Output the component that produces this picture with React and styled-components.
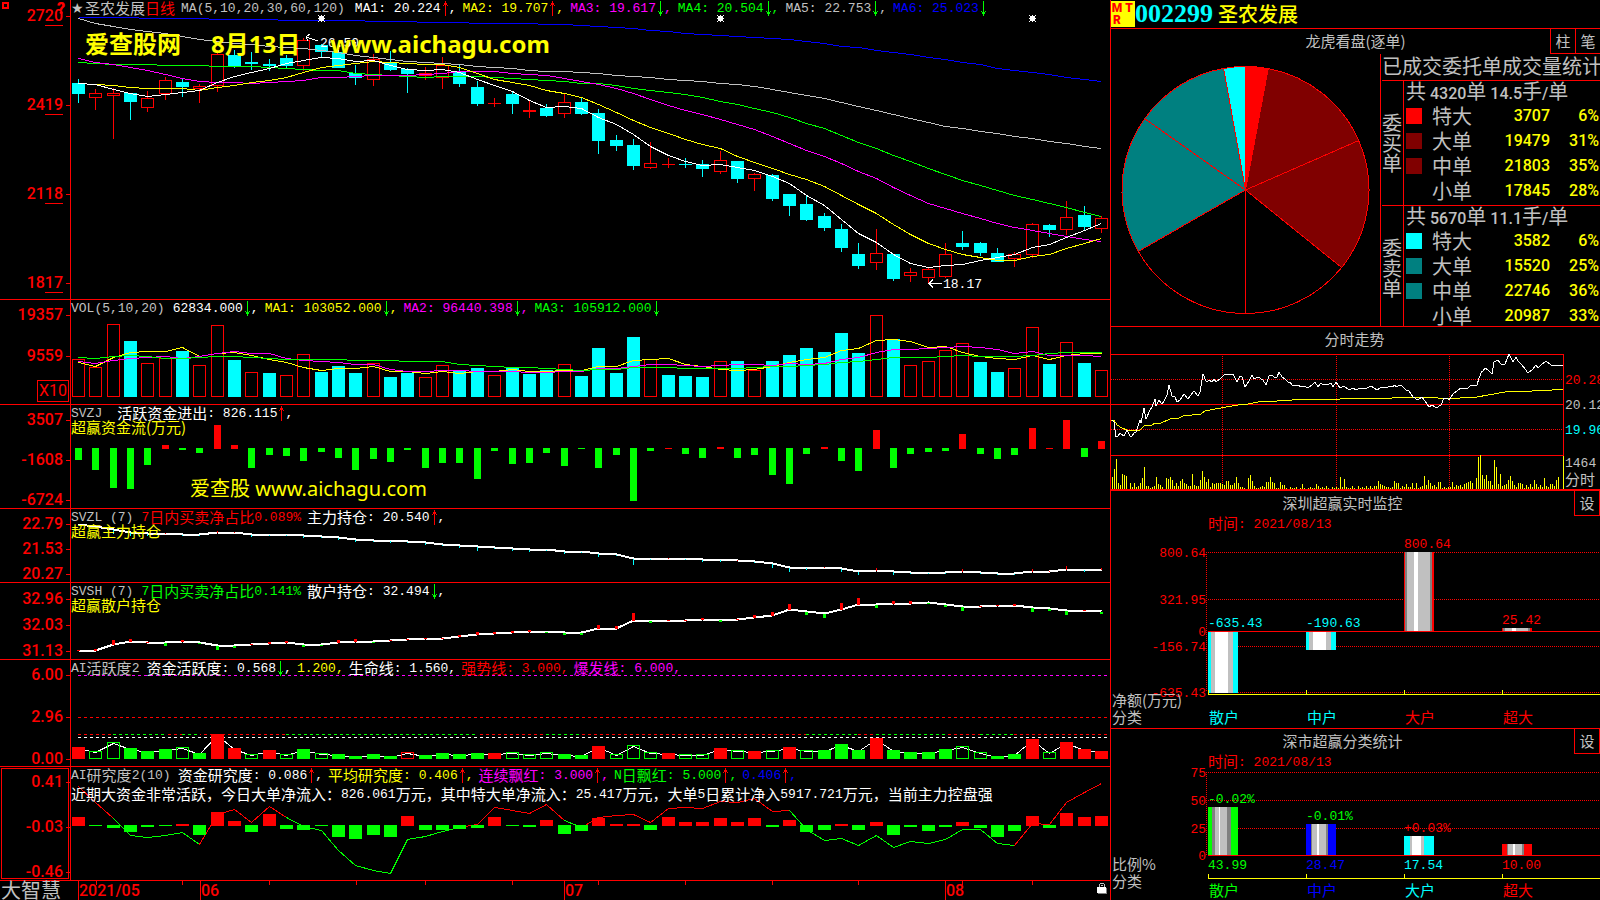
import React from "react";
import styled, { createGlobalStyle } from "styled-components";

const RED = "#ff0000";
const GREEN = "#00ff00";
const CYAN = "#00ffff";
const YELLOW = "#ffff00";
const MAGENTA = "#ff00ff";
const BLUE = "#0000ff";
const SILVER = "#c0c0c0";
const GREY = "#808080";
const WHITE = "#ffffff";
const MAROON = "#800000";
const TEAL = "#008080";

const HAN = '"Noto Sans CJK SC", sans-serif';
const MONO = '"Liberation Mono", "Noto Sans CJK SC", monospace';
const DIGITS = 'Roboto, "Noto Sans CJK SC", sans-serif';

/* ---------- data ---------- */

// type, high, body top, body bottom, low
const candles = [
  ["c", 79, 83, 94, 103], ["r", 89, 93, 98, 110], ["r", 88, 93, 96, 139], ["c", 93, 93, 102, 120],
  ["r", 91, 98, 108, 112], ["r", 77, 80, 94, 100], ["c", 78, 82, 87, 97], ["r", 84, 86, 89, 103],
  ["r", 50, 54, 86, 92], ["c", 50, 55, 67, 68], ["c", 52, 62, 64, 70], ["c", 59, 64, 66, 71],
  ["c", 55, 58, 66, 68], ["r", 38, 40, 66, 71], ["c", 44, 45, 52, 57], ["c", 50, 52, 68, 68],
  ["c", 65, 73, 78, 85], ["r", 54, 59, 80, 86], ["c", 51, 63, 70, 71], ["c", 68, 69, 74, 93],
  ["r", 67, 73, 76, 80], ["r", 57, 65, 78, 89], ["c", 65, 71, 84, 87], ["c", 81, 87, 104, 106],
  ["r", 98, 103, 104, 107], ["c", 92, 94, 104, 114], ["r", 101, 110, 112, 118], ["c", 104, 108, 116, 117],
  ["r", 94, 102, 114, 118], ["c", 98, 102, 114, 115], ["c", 109, 113, 141, 154], ["c", 135, 140, 146, 151],
  ["c", 139, 145, 166, 170], ["r", 142, 163, 168, 169], ["r", 158, 164, 165, 168], ["c", 158, 164, 165, 168],
  ["c", 160, 164, 169, 177], ["r", 151, 160, 172, 174], ["c", 161, 161, 179, 183], ["r", 173, 174, 179, 191],
  ["c", 174, 175, 199, 201], ["c", 194, 194, 206, 216], ["c", 196, 204, 220, 221], ["c", 213, 216, 228, 231],
  ["c", 224, 229, 248, 252], ["c", 243, 254, 266, 269], ["r", 229, 253, 263, 270], ["c", 254, 254, 279, 281],
  ["r", 268, 272, 276, 282], ["r", 267, 269, 278, 283], ["r", 243, 254, 277, 278], ["c", 231, 243, 247, 250],
  ["c", 242, 243, 253, 256], ["c", 248, 253, 262, 262], ["r", 252, 254, 259, 267], ["r", 223, 224, 255, 258],
  ["c", 224, 225, 230, 237], ["r", 201, 217, 230, 235], ["c", 206, 215, 227, 230], ["r", 216, 218, 229, 233],
];

// every series below is sampled at three units per pixel
const ma5 = [248, 253, 266, 280, 289, 281, 277, 271, 246, 228, 215, 205, 190, 181, 172, 175, 182, 179, 196, 207, 211, 206, 215, 237, 255, 273, 300, 322, 319, 325, 350, 371, 401, 437, 466, 482, 496, 493, 501, 510, 528, 550, 586, 616, 658, 698, 726, 763, 789, 802, 796, 793, 779, 770, 761, 742, 733, 710, 690, 669];
const ma10 = [250, 253, 255, 262, 265, 263, 265, 270, 262, 256, 246, 240, 231, 215, 200, 194, 189, 184, 187, 190, 193, 193, 200, 219, 236, 246, 254, 270, 280, 292, 311, 335, 361, 380, 398, 416, 433, 445, 468, 487, 505, 523, 538, 558, 584, 612, 640, 671, 702, 730, 748, 761, 770, 780, 781, 769, 763, 744, 730, 715];
const ma20 = [175, 186, 193, 202, 210, 222, 234, 243, 247, 247, 250, 246, 242, 239, 232, 230, 228, 226, 226, 224, 221, 218, 214, 214, 214, 218, 223, 226, 235, 242, 252, 265, 280, 298, 316, 329, 343, 357, 373, 388, 408, 430, 450, 469, 490, 514, 534, 560, 586, 610, 625, 640, 655, 670, 682, 691, 700, 709, 718, 724];
const ma30 = [187, 190, 192, 193, 193, 194, 194, 196, 197, 197, 199, 202, 205, 206, 209, 211, 219, 223, 226, 228, 230, 229, 227, 229, 232, 233, 237, 240, 244, 248, 250, 256, 263, 269, 276, 283, 292, 302, 313, 323, 336, 350, 368, 385, 404, 425, 443, 464, 484, 503, 521, 541, 556, 571, 585, 598, 610, 622, 635, 647];
const ma60 = [55, 68, 79, 88, 94, 100, 108, 116, 122, 128, 132, 137, 140, 145, 150, 156, 165, 171, 177, 182, 186, 190, 193, 197, 200, 204, 209, 212, 212, 215, 220, 224, 228, 232, 236, 240, 244, 248, 253, 259, 267, 277, 286, 295, 305, 319, 330, 342, 355, 367, 377, 385, 392, 400, 408, 415, 422, 429, 437, 445];
const ma120 = [52, 51, 50, 52, 53, 53, 54, 55, 56, 57, 58, 58, 59, 59, 60, 60, 61, 62, 64, 64, 65, 65, 65, 68, 68, 69, 70, 71, 73, 74, 77, 80, 85, 90, 94, 98, 101, 104, 107, 111, 115, 118, 122, 129, 137, 142, 149, 157, 163, 170, 178, 185, 193, 203, 209, 215, 223, 230, 236, 243];

const volTypes = "rrrcrrcrrcrcrrcccrccrrccrcccrccccrcccrcrccccccrcrrrrccrrcrcr";
const vol = [193, 217, 88, 138, 205, 189, 168, 211, 91, 195, 232, 234, 241, 178, 231, 213, 234, 205, 246, 234, 247, 211, 228, 219, 241, 216, 237, 226, 208, 243, 159, 234, 126, 193, 240, 243, 246, 199, 198, 226, 198, 180, 159, 171, 114, 174, 61, 132, 211, 199, 166, 145, 201, 231, 220, 97, 207, 142, 204, 226];
const volMa5 = [202, 214, 187, 171, 169, 169, 156, 183, 175, 172, 180, 192, 200, 216, 224, 220, 220, 213, 227, 228, 235, 228, 235, 229, 228, 223, 228, 227, 226, 226, 214, 214, 196, 193, 190, 207, 212, 222, 226, 223, 213, 200, 193, 187, 166, 159, 136, 133, 139, 157, 154, 170, 183, 190, 193, 179, 193, 180, 175, 175];
const volMa10 = [199, 203, 196, 190, 187, 184, 188, 183, 173, 168, 174, 175, 188, 195, 199, 200, 208, 206, 222, 227, 227, 226, 224, 228, 229, 228, 230, 232, 227, 229, 220, 220, 212, 208, 208, 211, 213, 211, 208, 208, 211, 205, 208, 205, 193, 186, 170, 163, 163, 160, 157, 154, 157, 163, 175, 167, 180, 181, 181, 184];
const volMa20 = [187, 190, 184, 181, 184, 189, 190, 186, 184, 184, 186, 189, 192, 193, 193, 193, 196, 196, 196, 197, 199, 199, 208, 211, 212, 215, 217, 218, 223, 226, 223, 223, 217, 217, 217, 220, 220, 220, 218, 217, 214, 213, 211, 207, 202, 199, 191, 187, 187, 185, 184, 179, 184, 184, 184, 179, 175, 172, 172, 172];

const flow = [495, 525, 579, 582, 510, 450, 465, 474, 390, 450, 519, 480, 483, 498, 471, 489, 525, 492, 501, 465, 519, 504, 504, 552, 468, 507, 504, 474, 513, 462, 519, 480, 618, 468, 459, 477, 489, 456, 489, 480, 540, 567, 477, 456, 498, 528, 405, 519, 477, 471, 468, 417, 477, 492, 480, 399, 459, 375, 486, 438];

const mainHold = [60, 65, 76, 85, 87, 87, 89, 90, 84, 84, 89, 90, 91, 93, 95, 99, 105, 107, 108, 110, 113, 119, 122, 126, 128, 132, 135, 136, 141, 141, 146, 149, 162, 162, 162, 162, 164, 165, 169, 171, 178, 189, 189, 190, 192, 202, 197, 202, 204, 204, 204, 201, 204, 207, 207, 202, 201, 194, 195, 195];
const mainTicks = [-2, -3, -12, -10, -7, 4, -3, -4, 5, 4, -6, -4, -4, -5, -4, -6, -7, -3, -5, -3, -7, -4, -5, -12, -4, -6, -5, -3, -6, -3, -8, -4, -18, -3, 3, -3, -5, -6, 4, -4, -11, -12, -6, 3, -10, -9, 9, -8, -4, -3, -3, 8, -4, -4, -3, 8, 3, 12, -6, 6];
const retailHold = [438, 437, 421, 411, 413, 415, 410, 415, 423, 424, 421, 418, 415, 420, 420, 415, 410, 411, 409, 406, 403, 402, 397, 390, 387, 384, 381, 382, 384, 384, 373, 371, 348, 348, 348, 348, 345, 346, 344, 338, 332, 314, 321, 328, 315, 299, 299, 298, 296, 294, 300, 306, 307, 304, 303, 310, 313, 318, 319, 322];
const retailTicks = [3, 7, 14, 10, 3, -8, 6, -4, -11, -5, 4, 5, 5, -6, -3, 8, 9, -3, 4, 4, 4, 3, 5, 9, 5, 7, 6, -3, -6, -6, 11, 9, 24, -6, 3, 3, 7, -5, 4, 9, 12, 18, -8, -12, 22, 20, -9, 8, 9, -4, -5, -12, 3, 3, 7, -11, -6, -12, 3, -6];

// upper case is filled, lower case is hollow
const activeTypes = "RggGGGgGRRgRgGgGGGGrGGGGRgggGGRgggRggRgRgRgGGGRGGGGggGGRgRRR";
const active = [276, 289, 262, 279, 288, 282, 276, 294, 237, 279, 298, 285, 298, 282, 295, 297, 303, 297, 303, 292, 300, 294, 297, 294, 294, 292, 298, 292, 297, 300, 273, 298, 271, 292, 294, 298, 298, 279, 286, 288, 286, 276, 286, 285, 267, 285, 249, 285, 291, 291, 282, 274, 292, 303, 297, 252, 292, 261, 282, 288];

const study = [486, 513, 519, 531, 516, 513, 507, 540, 471, 498, 531, 477, 522, 525, 513, 546, 552, 540, 546, 483, 525, 525, 522, 519, 486, 513, 516, 495, 537, 528, 489, 507, 507, 525, 486, 501, 501, 489, 501, 489, 516, 495, 531, 525, 507, 525, 501, 540, 516, 528, 516, 501, 519, 546, 528, 483, 519, 474, 486, 483];
const studyLine = [394, 440, 488, 541, 547, 539, 532, 566, 478, 463, 502, 452, 485, 514, 526, 585, 629, 646, 653, 553, 542, 527, 517, 507, 457, 466, 473, 448, 496, 517, 487, 481, 478, 502, 460, 457, 460, 437, 442, 430, 469, 466, 522, 556, 550, 569, 541, 575, 559, 565, 552, 521, 523, 565, 571, 505, 508, 442, 412, 384];
const studyGreen = [[2, 7], [12, 22], [28, 29], [41, 54]];

const dayPrice = "1,66 3,68 5,83 7,82 9,79 13,82 16,76 19,82 21,82 23,79 25,78 29,66 30,69 33,54 35,65 39,56 41,53 44,45 45,52 48,46 51,50 53,47 56,41 58,31 61,42 64,43 66,48 69,46 73,40 77,45 79,42 83,37 87,42 89,38 91,26 92,20 95,27 96,28 98,26 101,28 103,25 105,28 109,25 113,21 118,20 122,20 126,28 129,22 131,23 134,33 138,27 141,21 143,25 147,23 152,26 155,31 158,22 161,21 163,23 166,23 168,18 171,23 174,25 177,28 179,28 181,31 187,31 190,33 193,32 197,34 201,31 204,28 207,33 210,29 212,31 218,30 220,29 222,33 225,28 229,34 233,32 238,36 242,34 245,36 249,34 254,35 260,32 266,36 271,33 277,33 280,32 282,33 283,31 286,33 288,31 291,32 295,36 298,37 302,43 307,46 311,43 314,47 318,53 321,51 325,54 330,51 333,44 336,44 338,46 342,40 347,36 350,34 357,34 360,31 366,31 368,24 371,17 372,17 374,14 377,16 381,20 383,8 387,6 390,10 394,10 398,0 402,8 405,3 407,7 411,11 417,19 421,16 425,11 427,14 430,11 435,7 440,11 452,11";
const dayAverage = "0,66 3,66 6,71 11,74 16,76 29,76 33,72 41,71 44,69 50,69 59,65 68,64 72,62 90,60 94,57 104,55 127,51 137,50 147,48 166,47 197,45 229,45 232,44 281,44 283,43 324,43 327,44 349,44 351,43 366,43 377,41 394,38 421,37 441,36 452,35";
const dayVolume = [12, 20, 30, 6, 4, 15, 14, 13, 0, 6, 2, 6, 2, 3, 6, 11, 22, 3, 3, 1, 2, 3, 12, 5, 4, 2, 0, 11, 10, 12, 9, 3, 6, 3, 8, 10, 6, 5, 3, 3, 15, 4, 3, 3, 9, 18, 12, 7, 10, 2, 6, 5, 6, 6, 6, 5, 4, 8, 8, 4, 4, 6, 12, 6, 2, 2, 1, 0, 11, 14, 8, 3, 1, 1, 2, 3, 2, 7, 7, 12, 7, 6, 1, 1, 7, 4, 4, 1, 0, 2, 1, 1, 2, 0, 1, 5, 1, 0, 1, 2, 1, 1, 5, 3, 1, 2, 1, 3, 1, 0, 2, 1, 2, 1, 12, 2, 10, 2, 1, 1, 3, 1, 0, 3, 1, 2, 1, 3, 1, 3, 1, 3, 3, 8, 5, 4, 3, 2, 2, 1, 2, 8, 6, 6, 1, 3, 2, 5, 2, 2, 6, 1, 6, 1, 2, 3, 13, 4, 9, 6, 3, 4, 2, 7, 7, 1, 2, 1, 2, 2, 7, 2, 4, 3, 4, 2, 5, 6, 7, 8, 6, 0, 11, 32, 34, 14, 10, 14, 8, 8, 4, 29, 22, 5, 15, 3, 4, 5, 9, 13, 8, 4, 2, 6, 6, 5, 1, 4, 2, 5, 2, 9, 5, 2, 4, 2, 11, 3, 2, 5, 5, 3, 9, 12];

const buyRows = [
  { name: "特大", color: RED, amount: "3707", share: "6%" },
  { name: "大单", color: MAROON, amount: "19479", share: "31%" },
  { name: "中单", color: MAROON, amount: "21803", share: "35%" },
  { name: "小单", color: "#000000", amount: "17845", share: "28%" },
];
const sellRows = [
  { name: "特大", color: CYAN, amount: "3582", share: "6%" },
  { name: "大单", color: TEAL, amount: "15520", share: "25%" },
  { name: "中单", color: TEAL, amount: "22746", share: "36%" },
  { name: "小单", color: "#000000", amount: "20987", share: "33%" },
];

// stripes: [width, colour] from left to right, 30px in all
const hollowCyan = [[3, CYAN], [4, SILVER], [13, WHITE], [5, SILVER], [5, CYAN]];
const hollowRed = [[1, RED], [2, GREY], [7, SILVER], [4, WHITE], [12, SILVER], [2, GREY], [2, RED]];
const netChart = {
  height: 196,
  grid: [20, 67, 114, 160],
  zero: 99,
  axis: 162,
  scale: [["800.64", 21], ["321.95", 68], ["0", 100], ["-156.74", 115], ["-635.43", 161]],
  side: [["净额(万元)", 167], ["分类", 184]],
  names: 184,
  bars: [
    { name: "散户", color: CYAN, top: 100, bottom: 161, stripes: hollowCyan, label: "-635.43", labelColor: CYAN, labelY: 91 },
    { name: "中户", color: CYAN, top: 100, bottom: 118, stripes: hollowCyan, label: "-190.63", labelColor: CYAN, labelY: 91 },
    { name: "大户", color: RED, top: 20, bottom: 99, stripes: hollowRed, label: "800.64", labelColor: RED, labelY: 12 },
    { name: "超大", color: RED, top: 96, bottom: 99, stripes: hollowRed, label: "25.42", labelColor: RED, labelY: 88 },
  ],
};
const shareChart = {
  height: 130,
  grid: [2, 30, 58],
  zero: 85,
  axis: 108,
  scale: [["75", 3], ["50", 31], ["25", 59], ["0", 86]],
  side: [["比例%", 93], ["分类", 110]],
  names: 119,
  bars: [
    { name: "散户", color: GREEN, top: 37, bottom: 85, stripes: [[4, GREEN], [3, GREY], [4, SILVER], [1, WHITE], [7, SILVER], [4, GREY], [7, GREEN]], label: "-0.02%", labelColor: GREEN, labelY: 29, value: "43.99" },
    { name: "中户", color: BLUE, top: 54, bottom: 85, stripes: [[5, BLUE], [1, GREY], [5, SILVER], [2, WHITE], [7, SILVER], [2, GREY], [8, BLUE]], label: "-0.01%", labelColor: GREEN, labelY: 46, value: "28.47" },
    { name: "大户", color: CYAN, top: 66, bottom: 85, stripes: [[6, CYAN], [2, SILVER], [9, WHITE], [3, SILVER], [10, CYAN]], label: "+0.03%", labelColor: RED, labelY: 58, value: "17.54" },
    { name: "超大", color: RED, top: 74, bottom: 85, stripes: [[5, RED], [1, GREY], [5, SILVER], [2, WHITE], [7, SILVER], [2, GREY], [8, RED]], value: "10.00" },
  ],
};

/* ---------- helpers ---------- */

const cx = (i) => 7 + Math.round(i * 17.34);

const linePoints = (series, offset, from = 0) =>
  series.map((v, i) => `${cx(i + from) + 0.5},${Math.round(v / 3 - offset) + 0.5}`).join(" ");

// Han characters are set larger than the half-width ones around them
const Mixed = ({ text }) =>
  text
    .split(/([\u3000-\u303f\u4e00-\u9fff\uff00-\uffef]+)/)
    .filter(Boolean)
    .map((part, i) => (/[\u3000-\uffef]/.test(part) ? <Han key={i}>{part}</Han> : part));

const Arrow = ({ dir }) => (
  <ArrowIcon viewBox="0 0 8 15" $color={dir === "up" ? RED : GREEN}>
    {dir === "up" ? (
      <path d="M4 0h1v15h-1zM3 2h3v2h-3zM2 4h1v1h-1zM6 4h1v1h-1z" />
    ) : (
      <path d="M4 0h1v15h-1zM3 11h3v2h-3zM2 10h1v1h-1zM6 10h1v1h-1z" />
    )}
  </ArrowIcon>
);

const Readout = ({ color, text, dir, last }) => (
  <ReadoutItem $color={color}>
    <Mixed text={text} />
    {dir && <Arrow dir={dir} />}
    {!last && ","}
  </ReadoutItem>
);

const Line = ({ points, color, width = 1 }) => (
  <polyline points={points} fill="none" stroke={color} strokeWidth={width} />
);

const Box = ({ i, top, bottom, color, hollow, fill = "none" }) =>
  hollow ? (
    <rect x={cx(i) - 5.5} y={top + 0.5} width={12} height={Math.max(bottom - top - 1, 1)} fill={fill} stroke={color} />
  ) : (
    <rect x={cx(i) - 6} y={top} width={13} height={bottom - top} fill={color} />
  );

/* ---------- left side panels ---------- */

const Chart = ({ height, children }) => (
  <ChartSvg viewBox={`0 0 1039 ${height}`} $height={height} preserveAspectRatio="none" shapeRendering="crispEdges">
    {children}
  </ChartSvg>
);

const Scale = ({ labels, gap, top = 6, selected, children }) => (
  <ScaleColumn $gap={gap} $top={top} $selected={selected}>
    {labels.map((l) => (
      <ScaleLabel key={l}>{l}</ScaleLabel>
    ))}
    {children}
  </ScaleColumn>
);

const PricePanel = () => (
  <Panel>
    <ScaleColumn $gap={71} $top={7}>
      <WindowMark />
      <HelpMark>?</HelpMark>
      {["2720", "2419", "2118", "1817"].map((l) => (
        <ScaleLabel key={l}>
          {l.slice(0, 2)}
          <Cents>{l.slice(2)}</Cents>
        </ScaleLabel>
      ))}
    </ScaleColumn>
    <Plot>
      <Chart height={299}>
        {candles.map(([type, high, top, bottom, low], i) => {
          const color = type === "c" ? CYAN : RED;
          return (
            <g key={i}>
              <rect x={cx(i)} y={high} width={1} height={low - high} fill={color} />
              <Box i={i} top={top} bottom={bottom} color={color} hollow={type === "r" && bottom - top > 2} fill="#000" />
            </g>
          );
        })}
        <Line points={linePoints(ma120, 0)} color={BLUE} />
        <Line points={linePoints(ma60, 0)} color={SILVER} />
        <Line points={linePoints(ma30, 0)} color={GREEN} />
        <Line points={linePoints(ma20, 0)} color={MAGENTA} />
        <Line points={linePoints(ma10, 0)} color={YELLOW} />
        <Line points={linePoints(ma5, 0)} color={WHITE} />
        {[14, 37, 55].map((i) => (
          <path
            key={i}
            fill={WHITE}
            transform={`translate(${cx(i) - 3} 15)`}
            d="M1 1h5v5h-5zM0 0h1v1h-1zM6 0h1v1h-1zM0 6h1v1h-1zM6 6h1v1h-1zM3 0h1v1h-1zM3 6h1v1h-1zM0 3h1v1h-1zM6 3h1v1h-1z"
          />
        ))}
        <path d="M247 41l-12-4m4-3l-4 3l2 4" fill="none" stroke={WHITE} />
        <path d="M871 283.500h-13m4-4l-4 4l4 4" fill="none" stroke={WHITE} />
      </Chart>
      <PlotText>
        <ReadoutRow>
          <PanelName $gap={10}>
            <StarMark>★</StarMark>
            <Han>圣农发展</Han>
            <Period>日线</Period>
            MA(5,10,20,30,60,120)
          </PanelName>
          <Readout color={WHITE} text="MA1: 20.224" dir="up" />
          <Readout color={YELLOW} text="MA2: 19.707" dir="up" />
          <Readout color={MAGENTA} text="MA3: 19.617" dir="down" />
          <Readout color={GREEN} text="MA4: 20.504" dir="down" />
          <Readout color={SILVER} text="MA5: 22.753" dir="down" />
          <Readout color={BLUE} text="MA6: 25.023" dir="down" last />
        </ReadoutRow>
      </PlotText>
      <PriceTag $left={249} $top={36}>26.50</PriceTag>
      <PriceTag $left={872} $top={277}>18.17</PriceTag>
      <Watermark $left={14} $top={28} $size={24} $bold>
        <span>爱查股网</span>
        <span>8月13日</span>
        <span>www.aichagu.com</span>
      </Watermark>
    </Plot>
  </Panel>
);

const VolumePanel = () => (
  <Panel>
    <Scale labels={["19357", "9559"]} gap={23}>
      <Multiplier>X10</Multiplier>
    </Scale>
    <Plot>
      <Chart height={104}>
        {vol.map((v, i) => (
          <Box
            key={i}
            i={i}
            top={Math.round(v / 3) - 5}
            bottom={97}
            color={volTypes[i] === "c" ? CYAN : RED}
            hollow={volTypes[i] === "r"}
          />
        ))}
        <Line points={linePoints(volMa5, 5)} color={YELLOW} />
        <Line points={linePoints(volMa10, 5)} color={MAGENTA} />
        <Line points={linePoints(volMa20, 5)} color={GREEN} />
      </Chart>
      <PlotText>
        <ReadoutRow>
          <PanelName>VOL(5,10,20)</PanelName>
          <Readout color={WHITE} text="62834.000" dir="down" />
          <Readout color={YELLOW} text="MA1: 103052.000" dir="down" />
          <Readout color={MAGENTA} text="MA2: 96440.398" dir="down" />
          <Readout color={GREEN} text="MA3: 105912.000" dir="down" last />
        </ReadoutRow>
      </PlotText>
    </Plot>
  </Panel>
);

const FlowPanel = () => (
  <Panel>
    <Scale labels={["3507", "-1608", "-6724"]} gap={22} />
    <Plot>
      <Chart height={103}>
        {flow.map((v, i) => {
          const up = v < 460;
          return (
            <rect
              key={i}
              x={cx(i) - 3}
              y={(up ? v : 459) / 3 - 110}
              width={7}
              height={(up ? 462 - v : v - 459) / 3}
              fill={up ? RED : GREEN}
            />
          );
        })}
      </Chart>
      <PlotText>
        <ReadoutRow>
          <PanelName $gap={15}>SVZJ</PanelName>
          <Readout color={WHITE} text="活跃资金进出: 826.115" dir="up" />
        </ReadoutRow>
        <Subtitle>超赢资金流(万元)</Subtitle>
      </PlotText>
      <Watermark $left={119} $top={68} $size={20}>
        爱查股 www.aichagu.com
      </Watermark>
    </Plot>
  </Panel>
);

const HoldPanel = ({ code, labels, gap, top, height, series, ticks, tickWidth, upColor, downColor, offset, ratio, ratioColor, hold, dir, note }) => (
  <Panel>
    <Scale labels={labels} gap={gap} top={top} />
    <Plot>
      <Chart height={height}>
        <Line points={linePoints(series, offset + 1)} color={WHITE} width={2} />
        {ticks.map((t, i) => {
          const y = Math.round(series[i] / 3) - offset;
          const len = Math.round(Math.abs(t) / 3);
          return (
            <rect
              key={i}
              x={cx(i) - (tickWidth - 1) / 2}
              y={t > 0 ? y - len : y}
              width={tickWidth}
              height={len}
              fill={t > 0 ? upColor : downColor}
            />
          );
        })}
      </Chart>
      <PlotText>
        <ReadoutRow>
          <PanelName>{code} (7)</PanelName>
          <ReadoutItem $color={ratioColor}>
            <Mixed text={ratio} />
          </ReadoutItem>
          <Readout color={WHITE} text={hold} dir={dir} />
        </ReadoutRow>
        <Subtitle>{note}</Subtitle>
      </PlotText>
    </Plot>
  </Panel>
);

const Dashes = ({ y, color, from = 7, to = 1036 }) => (
  <line x1={from} x2={to} y1={y + 0.5} y2={y + 0.5} stroke={color} strokeDasharray="3 3" />
);

const ActivePanel = () => (
  <Panel>
    <Scale labels={["6.00", "2.96", "0.00"]} gap={24} />
    <Plot>
      <Chart height={106}>
        <Dashes y={15} color={MAGENTA} />
        <Dashes y={57} color={RED} />
        <Dashes y={74} color={RED} />
        {[[42, 94], [111, 129], [215, 407], [475, 510], [735, 787], [805, 874], [909, 942]].map(([a, b]) => (
          <g key={a}>
            <rect x={a} y={74} width={b - a} height={1} fill="#000" />
            <Dashes y={74} color={GREEN} from={a} to={b} />
          </g>
        ))}
        <Dashes y={77} color={WHITE} />
        <Line points={linePoints(active, 4)} color={WHITE} />
        {active.map((v, i) => (
          <Box
            key={i}
            i={i}
            top={Math.round(v / 3) - 5}
            bottom={99}
            color={/r/i.test(activeTypes[i]) ? RED : GREEN}
            hollow={/[rg]/.test(activeTypes[i])}
          />
        ))}
      </Chart>
      <PlotText>
        <ReadoutRow $gap={5}>
          <PanelName>
            <Mixed text="AI活跃度2" />
          </PanelName>
          <Readout color={WHITE} text="资金活跃度: 0.568" dir="down" />
          <Readout color={YELLOW} text="1.200" />
          <Readout color={WHITE} text="生命线: 1.560" />
          <Readout color={RED} text="强势线: 3.000" />
          <Readout color={MAGENTA} text="爆发线: 6.000" />
        </ReadoutRow>
      </PlotText>
    </Plot>
  </Panel>
);

const StudyPanel = () => (
  <Panel>
    <Scale labels={["0.41", "-0.03", "-0.46"]} gap={27} selected />
    <Plot>
      <Chart height={113}>
        <Line points={linePoints(studyLine, 112)} color={RED} />
        {studyGreen.map(([a, b]) => (
          <Line key={a} points={linePoints(studyLine.slice(a, b + 1), 112, a)} color={GREEN} />
        ))}
        {study.map((v, i) => {
          const up = v < 509;
          return (
            <rect
              key={i}
              x={cx(i) - 6}
              y={(up ? v : 510) / 3 - 112}
              width={13}
              height={(up ? 513 - v : v - 510) / 3}
              fill={up ? RED : GREEN}
            />
          );
        })}
      </Chart>
      <PlotText>
        <ReadoutRow $gap={5}>
          <PanelName>
            <Mixed text="AI研究度2(10)" />
          </PanelName>
          <Readout color={WHITE} text="资金研究度: 0.086" dir="up" />
          <Readout color={YELLOW} text="平均研究度: 0.406" dir="up" />
          <Readout color={MAGENTA} text="连续飘红: 3.000" dir="up" />
          <Readout color={GREEN} text="N日飘红: 5.000" dir="up" />
          <Readout color={BLUE} text="0.406" dir="up" />
        </ReadoutRow>
        <Summary>
          <Mixed text="近期大资金非常活跃，今日大单净流入：826.061万元，其中特大单净流入：25.417万元，大单5日累计净入5917.721万元，当前主力控盘强" />
        </Summary>
      </PlotText>
    </Plot>
  </Panel>
);

const DateAxis = () => (
  <AxisRow>
    <Brand>大智慧</Brand>
    <Plot>
      <Chart height={19}>
        {[7, 129, 493, 874].map((x) => (
          <rect key={x} x={x} y={0} width={1} height={19} fill={RED} />
        ))}
        {[25, 111, 198, 285, 354, 441, 527, 614, 701, 787, 891, 961].map((x) => (
          <rect key={x} x={x} y={0} width={1} height={4} fill={RED} />
        ))}
      </Chart>
      <Months>
        <span>2021/05</span>
        <span>06</span>
        <span>07</span>
        <span>08</span>
        <LockButton aria-label="锁定">
          <svg width="11" height="12" viewBox="0 0 11 12" shapeRendering="crispEdges">
            <path d="M3 1h4v1h-4zM2 2h1v3h-1zM7 2h1v3h-1zM4 3h2v1h-2z" fill={SILVER} />
            <path d="M1 6h9v6h-9z" fill={GREY} />
            <path d="M0 5h9v6h-9z" fill={WHITE} />
          </svg>
        </LockButton>
      </Months>
    </Plot>
  </AxisRow>
);

/* ---------- right side panels ---------- */

const pieSlice = (from, to) => {
  const at = (deg) => {
    const a = (deg * Math.PI) / 180;
    return `${134.5 + 123.5 * Math.sin(a)} ${136 - 123.5 * Math.cos(a)}`;
  };
  return `M134.500 136L${at(from)}A123.500 123.500 0 0 1 ${at(to)}Z`;
};

const pie = [
  [0, 10.6, RED], [10.6, 66.4, MAROON], [66.4, 128.9, MAROON], [128.9, 180, "#000"],
  [180, 240.2, "#000"], [240.2, 305.3, TEAL], [305.3, 349.8, TEAL], [349.8, 360, CYAN],
];

const OrderTable = ({ side, count, lots, rows }) => (
  <OrderGroup>
    <SideName>{side}</SideName>
    <OrderGrid>
      <caption>
        <Hanzi>共</Hanzi> {count}<Hanzi>单</Hanzi> {lots}<Hanzi>手</Hanzi>/<Hanzi>单</Hanzi>
      </caption>
      <tbody>
        {rows.map((r) => (
          <tr key={r.name}>
            <SwatchCell>
              <Swatch $color={r.color} />
            </SwatchCell>
            <NameCell scope="row">{r.name}</NameCell>
            <NumberCell>{r.amount}</NumberCell>
            <NumberCell $last>{r.share}</NumberCell>
          </tr>
        ))}
      </tbody>
    </OrderGrid>
  </OrderGroup>
);

const OrderPanel = () => (
  <SidePanel>
    <TitleBar $inset={50}>
      <h2>龙虎看盘(逐单)</h2>
      <BarButton>柱</BarButton>
      <BarButton>笔</BarButton>
    </TitleBar>
    <OrderBody>
      <svg width="269" height="272" viewBox="0 0 269 272" shapeRendering="crispEdges">
        {pie.map(([from, to, color]) => (
          <path key={from} d={pieSlice(from, to)} fill={color} stroke={RED} />
        ))}
      </svg>
      <OrderStats>
        <StatsTitle>已成交委托单成交量统计</StatsTitle>
        <OrderTable side="委买单" count="4320" lots="14.5" rows={buyRows} />
        <OrderTable side="委卖单" count="5670" lots="11.1" rows={sellRows} />
      </OrderStats>
    </OrderBody>
  </SidePanel>
);

const DayPanel = () => (
  <SidePanel $thick>
    <DayTitle>分时走势</DayTitle>
    <DayBody>
      <svg width="453" height="135" viewBox="0 0 453 135" shapeRendering="crispEdges">
        <path d="M0 .5h452.500v101H0M0 50.500h453" fill="none" stroke={RED} />
        <path d="M0 25.500h453M0 75.500h453M111.500 0v135M225.500 0v135M338.500 0v135" stroke={RED} strokeDasharray="1 1" />
        {dayVolume.map((h, i) => (
          <rect key={i} x={1 + i * 2} y={135 - h} width={1} height={h} fill={YELLOW} />
        ))}
        <rect x={452} y={102} width={1} height={33} fill={YELLOW} />
        <polyline points={dayAverage} fill="none" stroke={YELLOW} />
        <polyline points={dayPrice} fill="none" stroke={WHITE} />
      </svg>
      <DayScale>
        <ScaleText $color={RED}>20.28</ScaleText>
        <ScaleText $color={SILVER}>20.12</ScaleText>
        <ScaleText $color={CYAN}>19.96</ScaleText>
        <DayFoot>
          1464
          <Han>分时</Han>
        </DayFoot>
      </DayScale>
    </DayBody>
  </SidePanel>
);

const BarPanel = ({ title, chart }) => (
  <SidePanel>
    <TitleBar>
      <h2>{title}</h2>
      <BarButton $edge>设</BarButton>
    </TitleBar>
    <TimeRow>
      <Mixed text="时间: 2021/08/13" />
    </TimeRow>
    <BarSvg width="489" height={chart.height} viewBox={`0 0 489 ${chart.height}`} shapeRendering="crispEdges">
      {chart.grid.map((y) => (
        <line key={y} x1={97} x2={489} y1={y + 0.5} y2={y + 0.5} stroke={RED} strokeDasharray="1 1" />
      ))}
      <line x1={95.5} x2={95.5} y1={chart.grid[0]} y2={Math.max(chart.zero, chart.grid[chart.grid.length - 1])} stroke={RED} strokeDasharray="1 1" />
      {chart.bars.map((b, i) => {
        let x = 97 + i * 98;
        return b.stripes.map(([w, color], k) => {
          x += w;
          return <rect key={k} x={x - w} y={b.top} width={w} height={b.bottom - b.top} fill={color} />;
        });
      })}
      <rect x={97} y={chart.zero} width={392} height={1} fill={RED} />
      <rect x={97} y={chart.axis} width={392} height={1} fill={YELLOW} />
      {chart.scale.map(([label, y]) => (
        <NumberText key={label} x={95} y={y} textAnchor="end" fill={RED}>{label}</NumberText>
      ))}
      {chart.side.map(([label, y]) => (
        <HanText key={label} x={1} y={y} fill={SILVER}>{label}</HanText>
      ))}
      {chart.bars.map((b, i) => (
        <g key={b.name}>
          <rect x={97 + i * 98} y={chart.axis - 4} width={1} height={4} fill={YELLOW} />
          {b.label && <NumberText x={97 + i * 98} y={b.labelY} fill={b.labelColor}>{b.label}</NumberText>}
          {b.value && <NumberText x={97 + i * 98} y={95} fill={b.color}>{b.value}</NumberText>}
          <HanText x={98 + i * 98} y={chart.names} fill={b.color}>{b.name}</HanText>
        </g>
      ))}
    </BarSvg>
  </SidePanel>
);

const App = () => {
  return (
    <Screen>
      <GlobalStyle />
      <MainColumn>
        <PricePanel />
        <VolumePanel />
        <FlowPanel />
        <HoldPanel
          code="SVZL"
          labels={["22.79", "21.53", "20.27"]}
          gap={7}
          top={6}
          height={73}
          series={mainHold}
          ticks={mainTicks}
          tickWidth={1}
          upColor={RED}
          downColor={CYAN}
          offset={4}
          ratio="7日内买卖净占比0.089%"
          ratioColor={RED}
          hold="主力持仓: 20.540"
          dir="up"
          note="超赢主力持仓"
        />
        <HoldPanel
          code="SVSH"
          labels={["32.96", "32.03", "31.13"]}
          gap={8}
          top={7}
          height={76}
          series={retailHold}
          ticks={retailTicks}
          tickWidth={3}
          upColor={RED}
          downColor={GREEN}
          offset={78}
          ratio="7日内买卖净占比0.141%"
          ratioColor={GREEN}
          hold="散户持仓: 32.494"
          dir="down"
          note="超赢散户持仓"
        />
        <ActivePanel />
        <StudyPanel />
        <DateAxis />
      </MainColumn>
      <SideColumn>
        <StockHeader>
          <Logo>
            <span>M</span>
            <span>T</span>
            <span>R</span>
          </Logo>
          <StockCode>002299</StockCode>
          <StockName>圣农发展</StockName>
        </StockHeader>
        <OrderPanel />
        <DayPanel />
        <BarPanel title="深圳超赢实时监控" chart={netChart} />
        <BarPanel title="深市超赢分类统计" chart={shareChart} />
      </SideColumn>
    </Screen>
  );
};

const GlobalStyle = createGlobalStyle`
  * {
    box-sizing: border-box;
  }
  body {
    margin: 0;
    background: #000;
    color: ${SILVER};
    overflow: hidden;
  }
  h1, h2 {
    margin: 0;
    font-weight: 400;
  }
  svg {
    display: block;
  }
`;

const Screen = styled.main`
  display: grid;
  grid-template-columns: 1fr 490px;
  min-height: 100vh;
  font-family: ${MONO};
  font-size: 13px;
  line-height: 15px;
  white-space: nowrap;
`;

const MainColumn = styled.div`
  min-width: 0;
`;

const SideColumn = styled.div`
  border-left: 1px solid ${RED};
  overflow: hidden;
`;

const Panel = styled.section`
  display: grid;
  grid-template-columns: 71px 1fr;
  border-bottom: 1px solid ${RED};
`;

const Plot = styled.div`
  position: relative;
  display: grid;
  min-width: 0;
`;

const ChartSvg = styled.svg`
  grid-area: 1 / 1;
  width: 100%;
  height: ${(p) => p.$height}px;
`;

const PlotText = styled.div`
  grid-area: 1 / 1;
  align-self: start;
  min-width: 0;
  z-index: 1;
`;

const ReadoutRow = styled.div`
  display: flex;
  gap: ${(p) => p.$gap || 6}px;
  height: 16px;
  padding-top: 1px;
`;

const ReadoutItem = styled.span`
  display: flex;
  align-items: center;
  white-space: pre;
  color: ${(p) => p.$color};
`;

const PanelName = styled.span`
  display: flex;
  align-items: center;
  margin-right: ${(p) => (p.$gap || 8) - 6}px;
  white-space: pre;
`;

const StarMark = styled.span`
  width: 14px;
  font: 14px/15px "DejaVu Sans", sans-serif;
`;

const Han = styled.span`
  padding-bottom: 3px;
  font-family: ${HAN};
  font-size: 15px;
`;

const Period = styled(Han)`
  color: ${RED};
  margin-right: 6px;
`;

const ArrowIcon = styled.svg`
  width: 8px;
  height: 15px;
  fill: ${(p) => p.$color};
  shape-rendering: crispEdges;
`;

const Subtitle = styled.div`
  margin-top: -2px;
  font-family: ${HAN};
  font-size: 15px;
  color: ${YELLOW};
`;

const Summary = styled.div`
  display: flex;
  align-items: center;
  height: 15px;
  margin-top: 4px;
  color: ${WHITE};
`;

// takes its height from the plot beside it
const ScaleColumn = styled.div`
  position: relative;
  display: flex;
  flex-direction: column;
  align-items: flex-end;
  gap: ${(p) => p.$gap}px;
  height: 0;
  min-height: 100%;
  padding-top: ${(p) => p.$top}px;
  border-right: 1px solid ${RED};
  font: 500 16px/18px ${DIGITS};
  color: ${RED};
  ${(p) => p.$selected && `box-shadow: inset 0 0 0 1px #000, inset 0 0 0 2px ${RED};`}
`;

const ScaleLabel = styled.div`
  display: flex;
  flex: none;
  align-items: center;
  height: 18px;
  &::after {
    content: "";
    width: 4px;
    height: 1px;
    margin-left: 3px;
    background: ${RED};
  }
`;

const Cents = styled.span`
  border-bottom: 1px solid ${RED};
  height: 19px;
`;

const Multiplier = styled.div`
  flex: none;
  width: 32px;
  height: 22px;
  margin: -8px 1px 0 0;
  border: 1px solid ${RED};
  text-align: center;
  line-height: 20px;
  font-weight: 400;
`;

const WindowMark = styled.div`
  position: absolute;
  left: 2px;
  top: 2px;
  width: 7px;
  height: 7px;
  border: 2px solid ${RED};
`;

const HelpMark = styled.div`
  position: absolute;
  left: 57px;
  top: 0;
  font-weight: 900;
`;

const PriceTag = styled.div`
  position: absolute;
  left: ${(p) => (p.$left / 1039) * 100}%;
  top: ${(p) => p.$top}px;
  color: ${WHITE};
`;

const Watermark = styled.div`
  position: absolute;
  left: ${(p) => p.$left}px;
  top: ${(p) => p.$top}px;
  display: flex;
  gap: 30px;
  font: ${(p) => (p.$bold ? 700 : 400)} ${(p) => p.$size}px/32px "Noto Sans", ${HAN};
  color: ${YELLOW};
`;

const AxisRow = styled.div`
  display: grid;
  grid-template-columns: 71px 1fr;
`;

const Brand = styled.div`
  padding-left: 1px;
  font: 20px/18px ${HAN};
`;

const Months = styled.div`
  grid-area: 1 / 1;
  display: grid;
  grid-template-columns: 122fr 364fr 381fr 151fr 13px;
  padding-left: 8px;
  font: 500 16px/19px ${DIGITS};
  color: ${RED};
`;

const LockButton = styled.button`
  align-self: start;
  padding: 1px 0;
  border: 0;
  background: none;
`;

const StockHeader = styled.header`
  display: flex;
  align-items: center;
  height: 29px;
  border-bottom: 1px solid ${RED};
`;

const Logo = styled.div`
  display: grid;
  grid-template-columns: 12px 12px;
  align-content: center;
  justify-items: center;
  height: 26px;
  background: ${YELLOW};
  color: ${RED};
  font: 900 12px/12px Roboto, sans-serif;
`;

const StockCode = styled.span`
  color: ${CYAN};
  font: 700 26px/28px "Liberation Serif", serif;
`;

const StockName = styled.h1`
  height: 28px;
  margin-left: 5px;
  color: ${YELLOW};
  font: 500 20px/28px ${HAN};
`;

const SidePanel = styled.section`
  border-bottom: ${(p) => (p.$thick ? 2 : 1)}px solid ${RED};
  &:last-child {
    border-bottom: 0;
  }
`;

const TitleBar = styled.div`
  display: flex;
  height: 25px;
  padding-left: ${(p) => p.$inset || 0}px;
  h2 {
    flex: 1;
    text-align: center;
    font: 15px/23px ${HAN};
  }
`;

const BarButton = styled.button`
  width: ${(p) => (p.$edge ? 26 : 25)}px;
  padding: 0;
  border: solid ${RED};
  border-width: 0 ${(p) => (p.$edge ? 1 : 0)}px 1px 1px;
  background: #000;
  color: ${SILVER};
  font: 15px/22px ${HAN};
`;

const OrderBody = styled.div`
  display: grid;
  grid-template-columns: 269px 1fr;
  height: 272px;
`;

const OrderStats = styled.div`
  display: flex;
  flex-direction: column;
  min-width: 0;
  padding-left: 1px;
  border-left: 1px solid ${RED};
  overflow: hidden;
`;

const StatsTitle = styled.h2`
  flex: none;
  height: 26px;
  font: 20px/24px ${HAN};
`;

const OrderGroup = styled.div`
  display: grid;
  flex: none;
  grid-template-columns: 21px 1fr;
  height: 125px;
  border-top: 1px solid ${RED};
`;

const SideName = styled.div`
  align-self: center;
  font: 20px/20px ${HAN};
  width: 20px;
  white-space: normal;
`;

const OrderGrid = styled.table`
  display: block;
  height: 124px;
  border-left: 1px solid ${RED};
  border-spacing: 0;
  font: 500 16px/22px ${DIGITS};
  caption {
    display: block;
    height: 22px;
    padding-left: 2px;
    text-align: left;
    line-height: 20px;
  }
  tr {
    height: 25px;
  }
`;

const Hanzi = styled.span`
  font: 20px/20px ${HAN};
`;

const SwatchCell = styled.td`
  width: 28px;
  padding: 0 0 0 2px;
`;

const Swatch = styled.div`
  width: 16px;
  height: 16px;
  background: ${(p) => p.$color};
`;

const NameCell = styled.th`
  width: 60px;
  padding: 0;
  text-align: left;
  font: 20px/25px ${HAN};
`;

const NumberCell = styled.td`
  width: ${(p) => (p.$last ? 49 : 58)}px;
  padding: 0;
  text-align: right;
  color: ${YELLOW};
`;

const DayTitle = styled.h2`
  font: 15px/23px ${HAN};
  text-align: center;
  padding-right: 2px;
  height: 27px;
`;

const DayBody = styled.div`
  display: grid;
  grid-template-columns: 453px 1fr;
`;

const DayScale = styled.div`
  display: flex;
  flex-direction: column;
  gap: 10px;
  padding: 19px 0 0 1px;
  overflow: hidden;
`;

const ScaleText = styled.span`
  color: ${(p) => p.$color};
`;

const DayFoot = styled.span`
  display: grid;
  margin-top: auto;
`;

const TimeRow = styled.div`
  display: flex;
  align-items: center;
  height: 16px;
  padding-left: 97px;
  white-space: pre;
  color: ${RED};
`;

const BarSvg = styled.svg`
  overflow: visible;
`;

const NumberText = styled.text`
  font: 13px ${MONO};
  dominant-baseline: central;
`;

const HanText = styled.text`
  font: 15px ${HAN};
  dominant-baseline: central;
`;

export default App;
